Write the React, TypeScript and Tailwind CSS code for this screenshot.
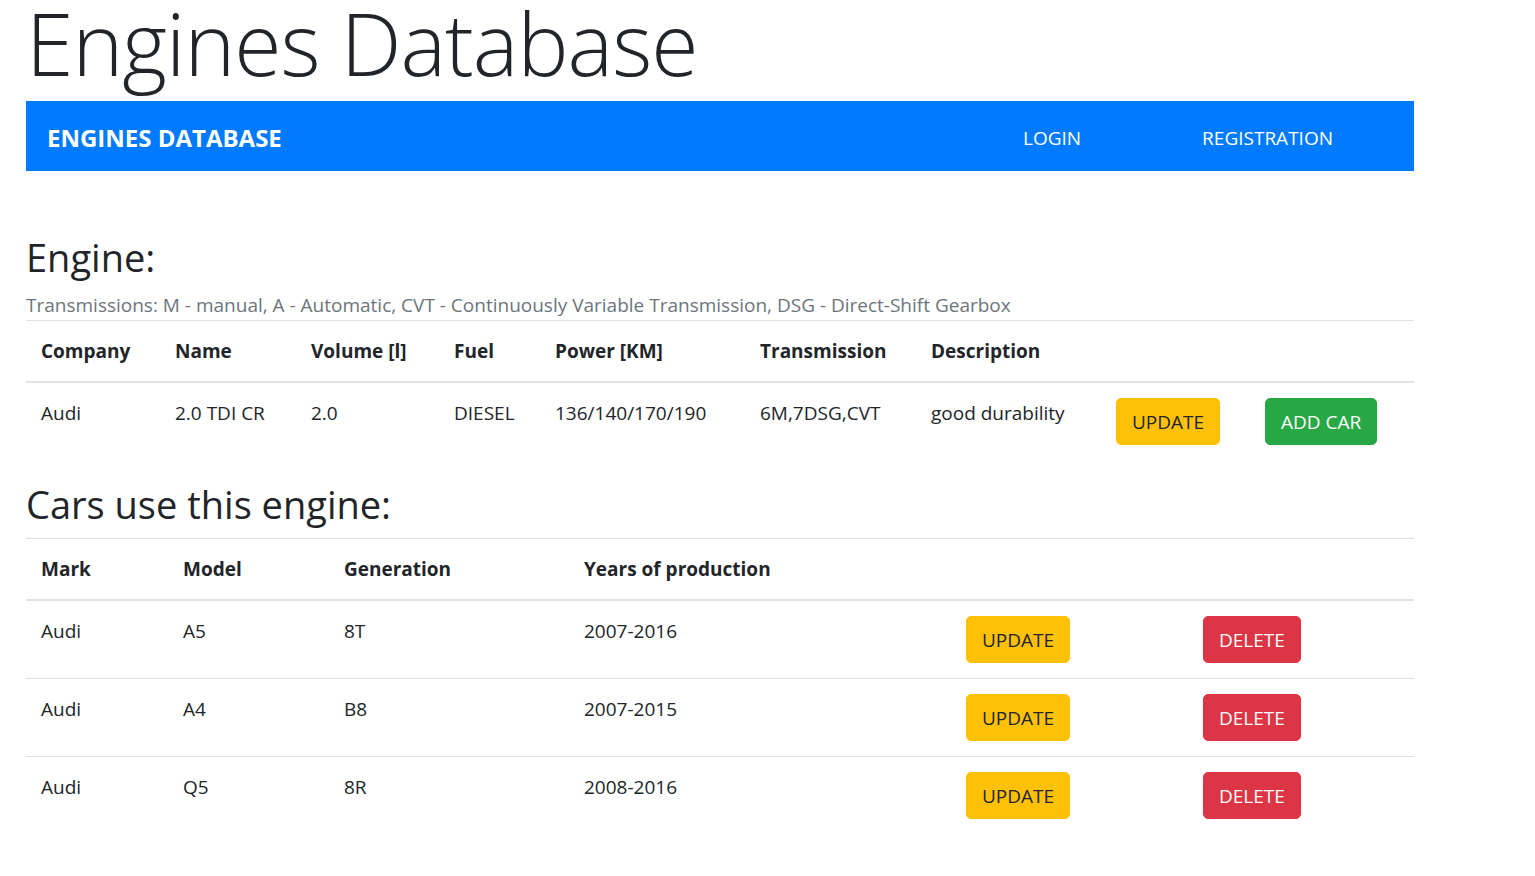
import React from "react";

const engineCols = [
	{ label: "Company", w: "w-[134px]" },
	{ label: "Name", w: "w-[136px]" },
	{ label: "Volume [l]", w: "w-[143px]" },
	{ label: "Fuel", w: "w-[101px]" },
	{ label: "Power [KM]", w: "w-[205px]" },
	{ label: "Transmission", w: "w-[171px]" },
	{ label: "Description", w: "w-[185px]" },
	{ label: "", w: "w-[149px]" },
	{ label: "", w: "w-[164px]" },
];

const engine = ["Audi", "2.0 TDI CR", "2.0", "DIESEL", "136/140/170/190", "6M,7DSG,CVT", "good durability"];

const carCols = [
	{ label: "Mark", w: "w-[142px]" },
	{ label: "Model", w: "w-[161px]" },
	{ label: "Generation", w: "w-[240px]" },
	{ label: "Years of production", w: "w-[382px]" },
	{ label: "", w: "w-[237px]" },
	{ label: "", w: "w-[226px]" },
];

const cars = [
	{ mark: "Audi", model: "A5", gen: "8T", years: "2007-2016" },
	{ mark: "Audi", model: "A4", gen: "B8", years: "2007-2015" },
	{ mark: "Audi", model: "Q5", gen: "8R", years: "2008-2016" },
];

const btn = "rounded-[5px] border px-[15px] py-[7.5px] text-[19px] leading-[30px]";
const cell = "px-[15px] py-[15px] align-top";

const App = () => {
	return (
		<div className="min-h-screen bg-white font-['Open_Sans',sans-serif] text-[#212529]">
			<div className="ml-[26px] w-[1388px]">
				<h1 className="mb-[16px] text-[86px] font-light leading-[85px] tracking-[-1px]">Engines Database</h1>

				<nav className="flex h-[70px] items-center bg-[#007bff] px-[21px] pt-[4px] text-white">
					<span className="text-[24px] font-bold">ENGINES DATABASE</span>
					<div className="ml-auto flex text-[19px]">
						<span className="mr-[121px]">LOGIN</span>
						<span className="mr-[60px]">REGISTRATION</span>
					</div>
				</nav>

				<h2 className="mt-[62px] mb-[9px] text-[38px] leading-[48px]">Engine:</h2>
				<p className="text-[19px] leading-[30px] text-[#6c757d]">
					Transmissions: M - manual, A - Automatic, CVT - Continuously Variable Transmission, DSG - Direct-Shift Gearbox
				</p>

				<table className="mb-[20px] w-full table-fixed border-collapse text-left text-[19px] leading-[30px]">
					<thead>
						<tr className="border-t border-[#dee2e6]">
							{engineCols.map((c, i) => (
								<th key={i} className={`${c.w} border-b-2 border-[#dee2e6] px-[15px] py-[15px] font-bold`}>
									{c.label}
								</th>
							))}
						</tr>
					</thead>
					<tbody>
						<tr>
							{engine.map((v, i) => (
								<td key={i} className={cell}>
									{v}
								</td>
							))}
							<td className={cell}>
								<button className={`${btn} border-[#ffc107] bg-[#ffc107] text-[#212529]`}>UPDATE</button>
							</td>
							<td className={cell}>
								<button className={`${btn} border-[#28a745] bg-[#28a745] text-white`}>ADD CAR</button>
							</td>
						</tr>
					</tbody>
				</table>

				<h2 className="mb-[10px] text-[38px] leading-[48px]">Cars use this engine:</h2>

				<table className="w-full table-fixed border-collapse text-left text-[19px] leading-[30px]">
					<thead>
						<tr className="border-t border-[#dee2e6]">
							{carCols.map((c, i) => (
								<th key={i} className={`${c.w} border-b-2 border-[#dee2e6] px-[15px] py-[15px] font-bold`}>
									{c.label}
								</th>
							))}
						</tr>
					</thead>
					<tbody>
						{cars.map((car, i) => (
							<tr key={i} className="border-t border-[#dee2e6]">
								<td className={cell}>{car.mark}</td>
								<td className={cell}>{car.model}</td>
								<td className={cell}>{car.gen}</td>
								<td className={cell}>{car.years}</td>
								<td className={cell}>
									<button className={`${btn} border-[#ffc107] bg-[#ffc107] text-[#212529]`}>UPDATE</button>
								</td>
								<td className={cell}>
									<button className={`${btn} border-[#dc3545] bg-[#dc3545] text-white`}>DELETE</button>
								</td>
							</tr>
						))}
					</tbody>
				</table>
			</div>
		</div>
	);
};

export default App;
